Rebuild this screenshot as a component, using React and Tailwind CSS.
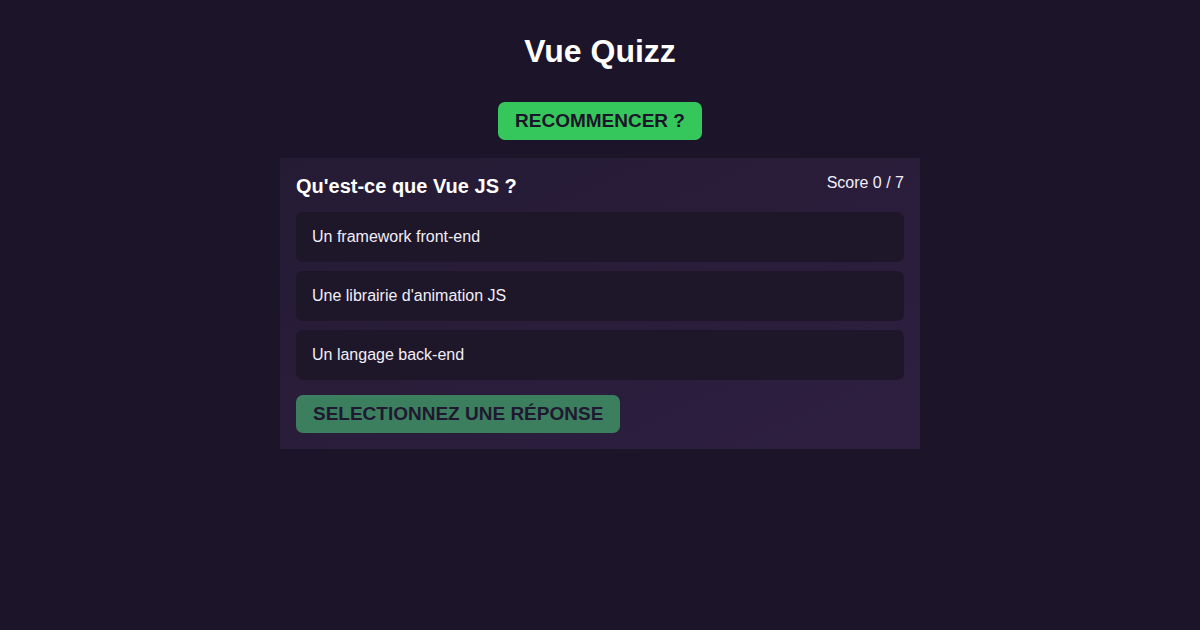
import React from "react";

const answers = [
  "Un framework front-end",
  "Une librairie d'animation JS",
  "Un langage back-end",
];

const App = () => {
  return (
    <div
      className="min-h-[630px] w-full bg-[#1c1529] text-white flex flex-col items-center"
      style={{ fontFamily: '"Liberation Sans", Arial, sans-serif' }}
    >
      <h1 className="mt-[33px] text-[32px] leading-[37px] font-bold">Vue Quizz</h1>

      <button className="mt-[32px] h-[38px] px-[17px] rounded-[7px] bg-[#36c75c] text-[#1c1529] text-[19px] font-bold flex items-center">
        RECOMMENCER ?
      </button>

      <div className="mt-[18px] w-[640px] p-4 bg-gradient-to-br from-[#251b34] to-[#2e1f41]">
        <div className="flex justify-between items-start">
          <h2 className="mt-[1px] text-[20px] leading-[23px] font-bold">Qu'est-ce que Vue JS ?</h2>
          <span className="text-[16px] leading-[18px] text-[#f2eef8]">Score 0 / 7</span>
        </div>

        <div className="mt-[14px] flex flex-col gap-[9px]">
          {answers.map((a) => (
            <div
              key={a}
              className="h-[50px] px-4 flex items-center rounded-[7px] bg-[#1e1629] text-[16px] text-[#f2eef8]"
            >
              {a}
            </div>
          ))}
        </div>

        <button className="mt-[15px] h-[38px] px-[17px] rounded-[7px] bg-[#3c7f5f] text-[#1f1830] text-[19px] font-bold flex items-center">
          SELECTIONNEZ UNE RÉPONSE
        </button>
      </div>
    </div>
  );
};

export default App;
